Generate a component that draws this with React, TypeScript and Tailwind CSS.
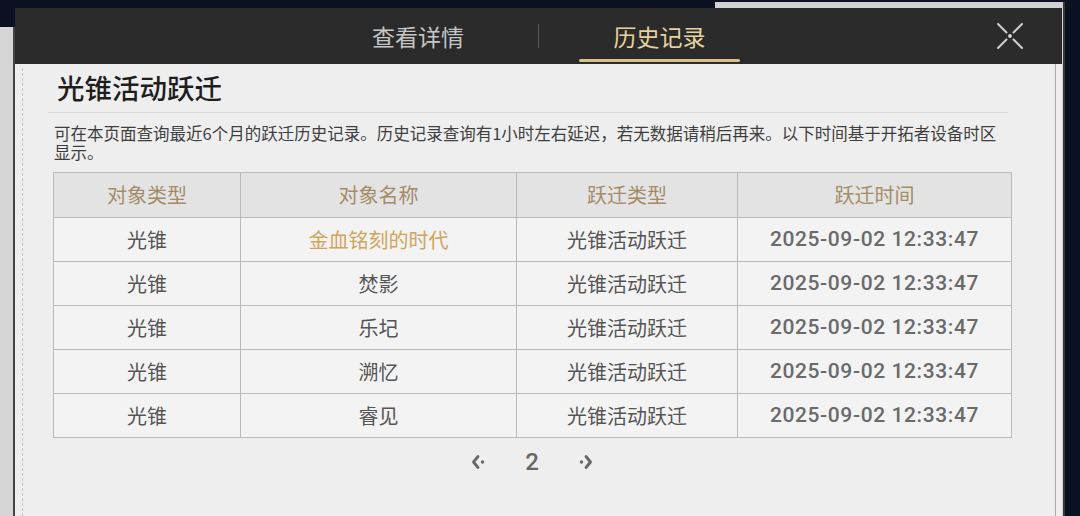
import React from 'react'

const rows = [
  { type: '光锥', name: '金血铭刻的时代', kind: '光锥活动跃迁', time: '2025-09-02 12:33:47', gold: true },
  { type: '光锥', name: '焚影', kind: '光锥活动跃迁', time: '2025-09-02 12:33:47' },
  { type: '光锥', name: '乐圮', kind: '光锥活动跃迁', time: '2025-09-02 12:33:47' },
  { type: '光锥', name: '溯忆', kind: '光锥活动跃迁', time: '2025-09-02 12:33:47' },
  { type: '光锥', name: '睿见', kind: '光锥活动跃迁', time: '2025-09-02 12:33:47' },
]

const cjk = "font-['Noto_Sans_CJK_SC',sans-serif]"

function CloseIcon() {
  return (
    <svg width="30" height="30" viewBox="0 0 30 30" fill="none" stroke="#cfcfcf" strokeWidth="2" strokeLinecap="round">
      <path d="M3 3 L11.5 11.5 M18.5 18.5 L27 27 M27 3 L18.5 11.5 M3 27 L11.5 18.5" />
      <circle cx="15" cy="15" r="1.9" fill="#d8d8d8" stroke="none" />
    </svg>
  )
}

function Chevron({ dir }: { dir: 'left' | 'right' }) {
  return (
    <svg width="18" height="18" viewBox="0 0 18 18" fill="none" stroke="#666" strokeWidth="2.8" strokeLinecap="round" strokeLinejoin="round">
      {dir === 'left' ? (
        <>
          <path d="M8 3.5 L3.5 9 L8 14.5" />
          <circle cx="12.5" cy="9" r="1.7" fill="#666" stroke="none" />
        </>
      ) : (
        <>
          <path d="M10 3.5 L14.5 9 L10 14.5" />
          <circle cx="5.5" cy="9" r="1.7" fill="#666" stroke="none" />
        </>
      )}
    </svg>
  )
}

export default function App() {
  const cell = 'border border-[#bababa] text-center'
  return (
    <div className={`relative w-[1080px] h-[516px] overflow-hidden bg-[#0b1120] ${cjk}`}>
      {/* papers behind */}
      <div className="absolute left-0 top-[27px] bottom-0 w-[15px] bg-[#d6d6d6] border-r-2 border-[#454545]" />
      <div className="absolute left-[715px] top-[2px] bottom-0 w-[350px] bg-[#d2d2d2] border-r-2 border-[#3a3a3a]" />

      <div className="relative ml-[15px] mt-[8px] w-[1047px] h-[508px] flex flex-col bg-[#eeeeee]">
        {/* decorative edges */}
        <div className="absolute left-[7px] top-[60px] bottom-0 border-l border-dashed border-[#c4c4c4]" />
        <div className="absolute right-[6px] top-[56px] bottom-0 w-px bg-[#a9a9a9]" />

        {/* header */}
        <div className="h-[56px] bg-[#2b2b2b] flex items-center shrink-0">
          <div className="ml-[323px] w-[160px] h-full flex items-center justify-center text-[23px] text-[#c6c6c6]">
            查看详情
          </div>
          <div className="mx-[40px] w-px h-[24px] bg-[#5a5a5a]" />
          <div className="relative w-[161px] h-full flex items-center justify-center text-[23px] text-[#e6d2a0]">
            历史记录
            <div className="absolute left-0 right-0 bottom-[2px] h-[3px] rounded-full bg-[#d8c188]" />
          </div>
          <div className="ml-auto mr-[37px] flex items-center">
            <CloseIcon />
          </div>
        </div>

        {/* body */}
        <div className="pl-[38px] pr-[51px] flex flex-col">
          <div className="h-[48px] pl-[4px] flex items-center text-[27.5px] font-medium text-[#1e1e1e] leading-none">
            光锥活动跃迁
          </div>
          <div className="h-px bg-[#d6d6d6] -ml-[5px] mr-[3px]" />
          <p className="mt-[11px] ml-[1px] text-[16.5px] leading-[19px] text-[#3e3e3e]">
            可在本页面查询最近6个月的跃迁历史记录。历史记录查询有1小时左右延迟，若无数据请稍后再来。以下时间基于开拓者设备时区显示。
          </p>

          <table className="mt-[10px] w-[958px] border-collapse table-fixed">
            <colgroup>
              <col className="w-[187px]" />
              <col className="w-[276px]" />
              <col className="w-[221px]" />
              <col className="w-[274px]" />
            </colgroup>
            <thead>
              <tr className="h-[45px] bg-[#e3e3e3] text-[20px] text-[#a38c67]">
                <th className={`${cell} font-normal`}>对象类型</th>
                <th className={`${cell} font-normal`}>对象名称</th>
                <th className={`${cell} font-normal`}>跃迁类型</th>
                <th className={`${cell} font-normal`}>跃迁时间</th>
              </tr>
            </thead>
            <tbody>
              {rows.map((r, i) => (
                <tr key={i} className="h-[44px] bg-[#f3f3f3] text-[20px] text-[#555]">
                  <td className={cell}>{r.type}</td>
                  <td className={`${cell} ${r.gold ? 'text-[#d1a45c]' : ''}`}>{r.name}</td>
                  <td className={cell}>{r.kind}</td>
                  <td className={`${cell} font-['Roboto',sans-serif] font-medium text-[21px] tracking-[0.6px] text-[#6a6a6a]`}>
                    {r.time}
                  </td>
                </tr>
              ))}
            </tbody>
          </table>

          <div className="w-[958px] h-[48px] flex items-center justify-center">
            <Chevron dir="left" />
            <span className="mx-[37px] font-['Roboto',sans-serif] font-medium text-[24px] text-[#666]">2</span>
            <Chevron dir="right" />
          </div>
        </div>
      </div>
    </div>
  )
}
